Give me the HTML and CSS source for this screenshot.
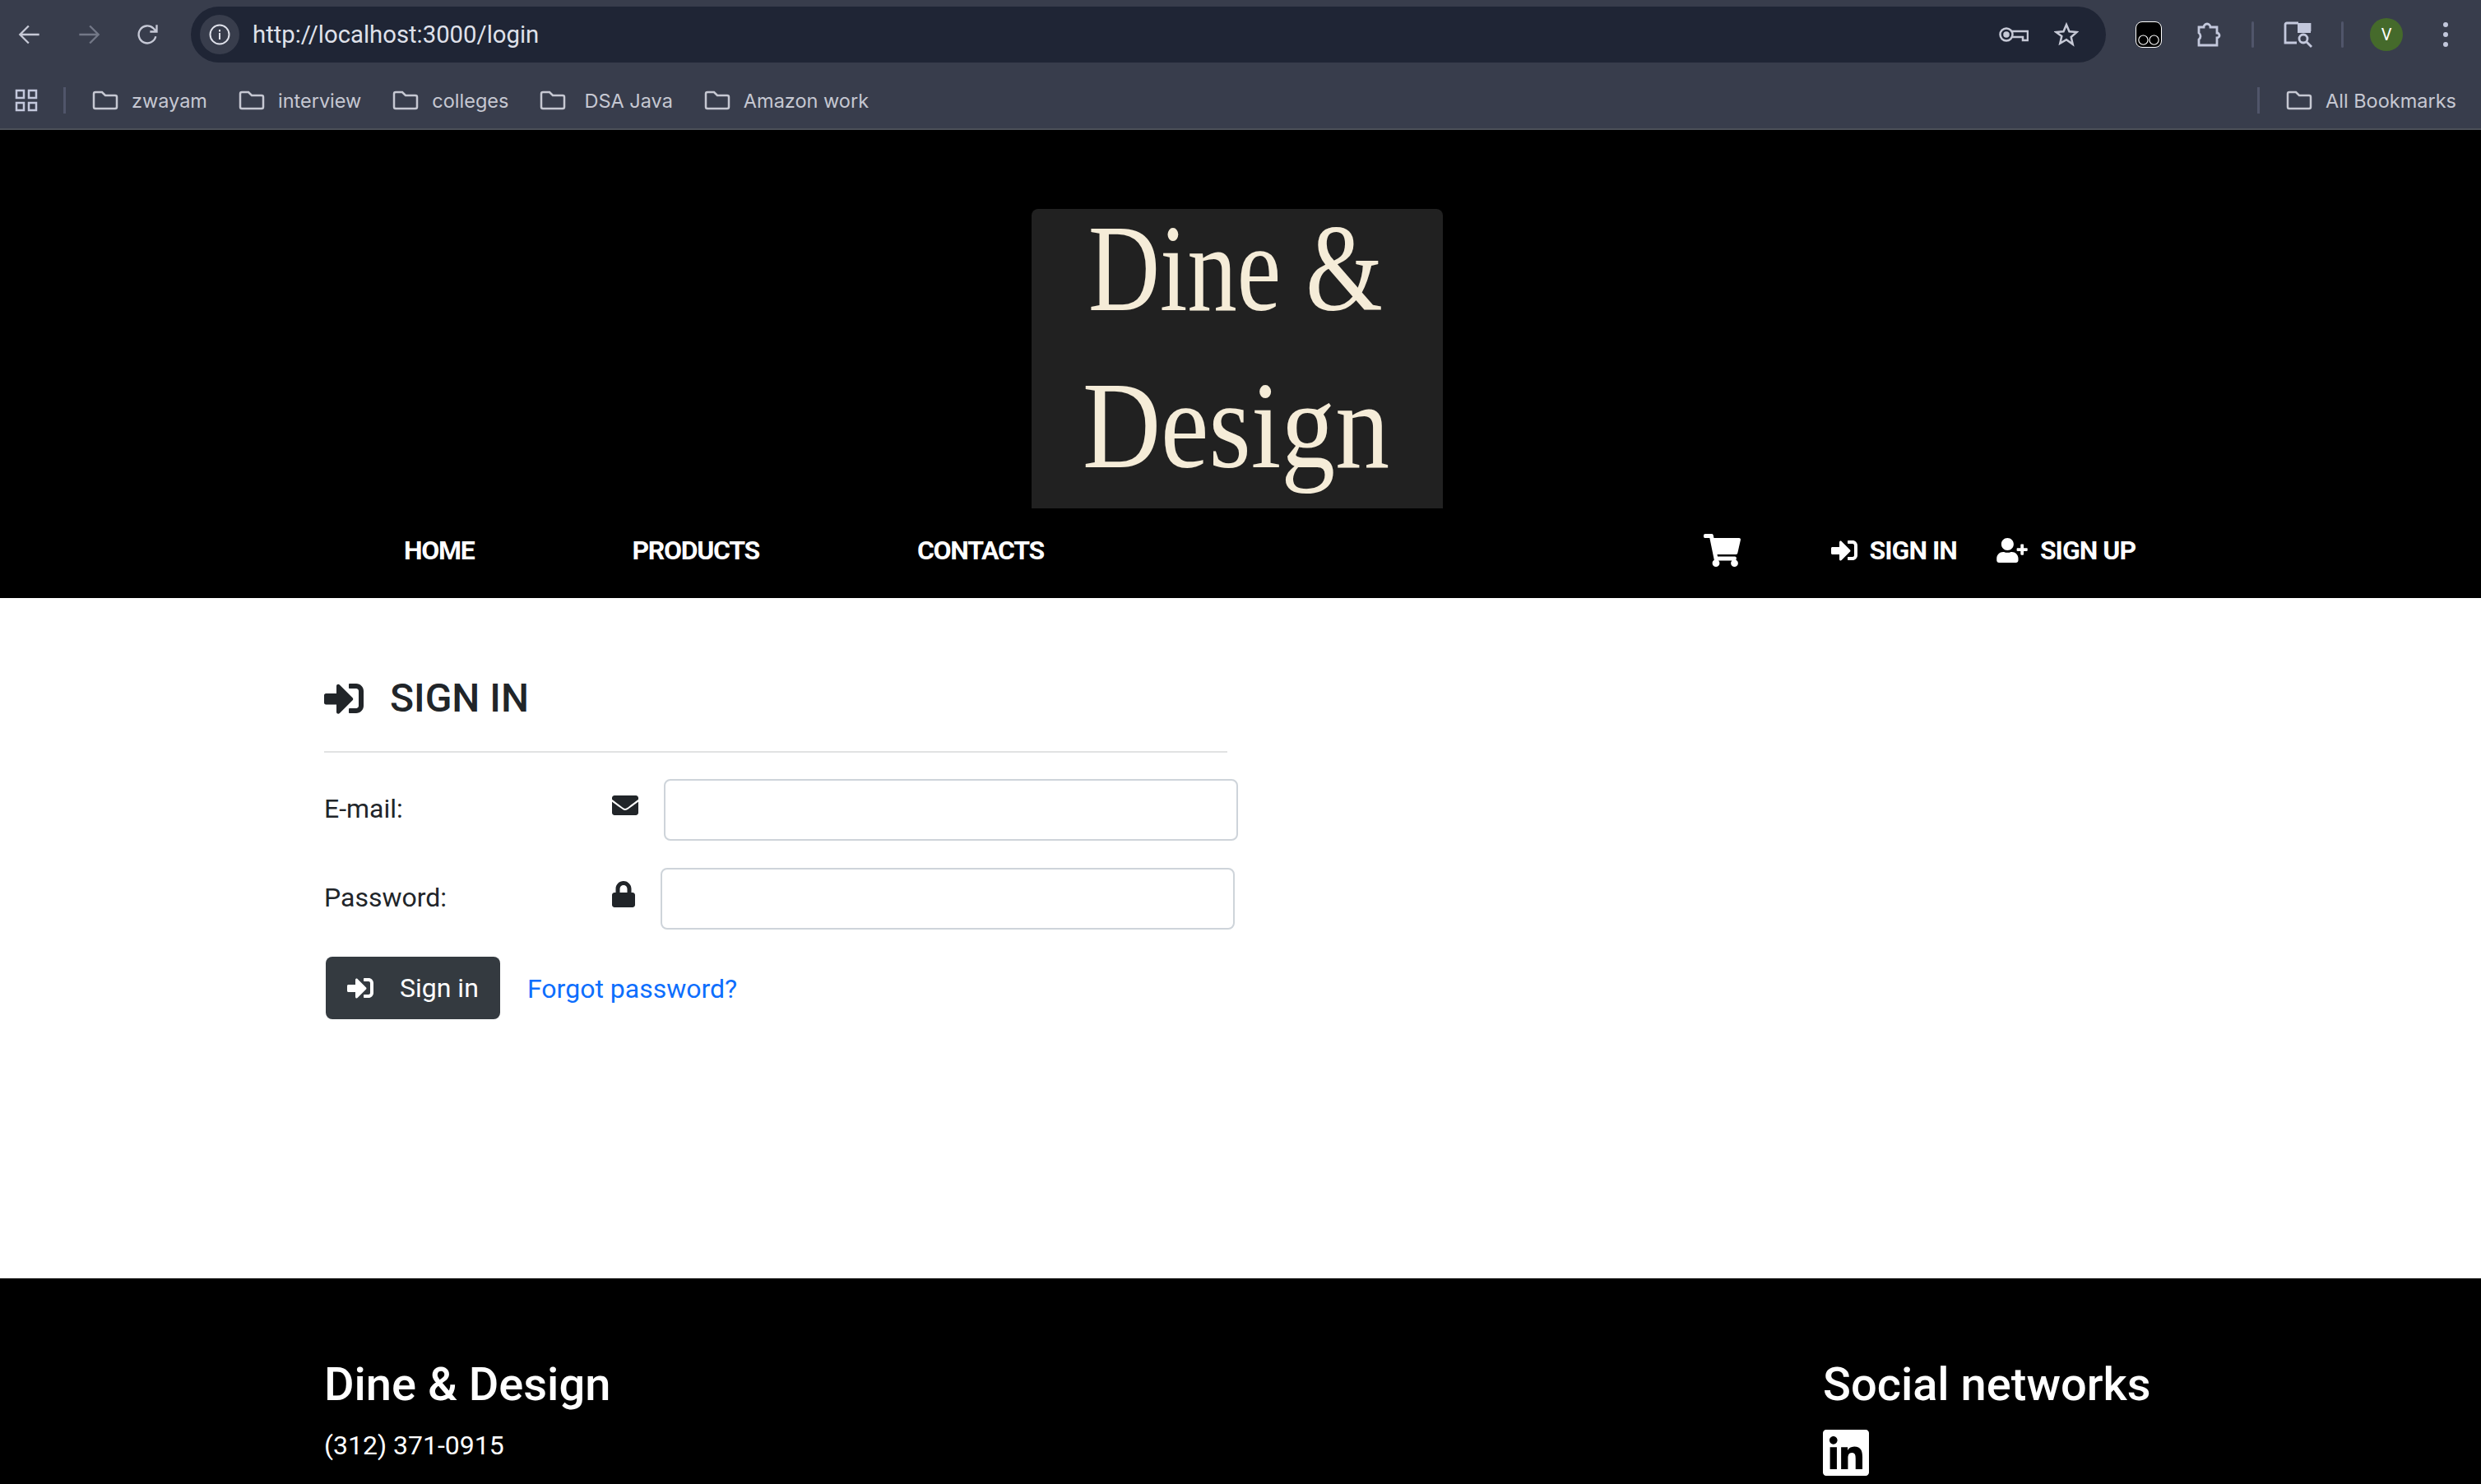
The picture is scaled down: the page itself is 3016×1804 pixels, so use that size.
FILE: index.html
```html
<!DOCTYPE html>
<html lang="en">
<head>
    <meta charset="UTF-8">
    <title>Dine &amp; Design | Sign in</title>
    <link rel="stylesheet" href="styles.css">
</head>
<body>
    <div class="toolbar">
        <svg class="tool-btn" viewBox="0 0 24 24" fill="none" stroke="#c6c9d6" stroke-width="2"><path d="M22 12H3M11 3l-9 9 9 9"/></svg>
        <svg class="tool-btn" viewBox="0 0 24 24" fill="none" stroke="#737887" stroke-width="2"><path d="M2 12h19M13 3l9 9-9 9"/></svg>
        <svg class="tool-btn" viewBox="0 0 24 24" fill="none" stroke="#c6c9d6" stroke-width="2"><path d="M20 14a9 9 0 1 1-2.500-8.500L21 9M21 2v7h-7"/></svg>
        <div class="omnibox">
            <span class="info-chip">
                <svg class="info-icon" viewBox="0 0 26 26" fill="none" stroke="#dfe1ea" stroke-width="2"><circle cx="13" cy="13" r="11.500"/><path d="M13 11v8M13 7v2.500"/></svg>
            </span>
            <span class="url">http://localhost:3000/login</span>
            <svg class="key-icon" viewBox="0 0 36 20" fill="none" stroke="#c6c9d6" stroke-width="2.500"><circle cx="9" cy="10" r="7.500"/><circle cx="9" cy="10" r="2.500" fill="#c6c9d6"/><path d="M16 6h19v11h-6v-4H16"/></svg>
            <svg class="star-icon" viewBox="0 0 30 30" fill="none" stroke="#c6c9d6" stroke-width="2.500"><path d="M15 3l3.500 8.300 9 .8-6.800 5.900 2 8.800L15 21.200 7.300 25.800l2-8.800L2.500 12.100l9-.8z"/></svg>
        </div>
        <span class="ext-glasses">
            <svg viewBox="0 0 32 32" fill="none" stroke="#fff" stroke-width="1.200"><circle cx="9" cy="23" r="6"/><circle cx="23" cy="23" r="6"/></svg>
        </span>
        <svg class="puzzle-icon" viewBox="0 0 30 32" fill="none" stroke="#c3c8dc" stroke-width="2.800"><path d="M3 7h6a4 4 0 0 1 8 0h8v7a3 3 0 0 1 0 6v9H3v-7a5 5 0 0 0 0-8z"/></svg>
        <span class="tool-divider"></span>
        <svg class="reader-icon" viewBox="0 0 36 32" fill="none"><path d="M17 2h16v12H17z" fill="#c3c8dc"/><path d="M18 2H4a2 2 0 0 0-2 2v22h14M32 12V2" stroke="#c3c8dc" stroke-width="2.800"/><circle cx="24" cy="21" r="5" stroke="#c3c8dc" stroke-width="2.800"/><path d="M28 25l6 6" stroke="#c3c8dc" stroke-width="2.800"/></svg>
        <span class="tool-divider divider-second"></span>
        <span class="avatar">V</span>
        <span class="menu-dots"><i></i><i></i><i></i></span>
    </div>

    <div class="bookmarks">
        <svg class="apps-icon" viewBox="0 0 28 28" fill="none" stroke="#c3c8dc" stroke-width="2.500"><path d="M2 2h9v9H2zM17 2h9v9h-9zM2 17h9v9H2zM17 17h9v9h-9z"/></svg>
        <span class="bm-divider"></span>
        <a class="bm"><svg class="folder" viewBox="0 0 32 24"><path d="M2 4a2 2 0 0 1 2-2h8l4 4h12a2 2 0 0 1 2 2v12a2 2 0 0 1-2 2H4a2 2 0 0 1-2-2z"/></svg>zwayam</a>
        <a class="bm"><svg class="folder" viewBox="0 0 32 24"><path d="M2 4a2 2 0 0 1 2-2h8l4 4h12a2 2 0 0 1 2 2v12a2 2 0 0 1-2 2H4a2 2 0 0 1-2-2z"/></svg>interview</a>
        <a class="bm"><svg class="folder" viewBox="0 0 32 24"><path d="M2 4a2 2 0 0 1 2-2h8l4 4h12a2 2 0 0 1 2 2v12a2 2 0 0 1-2 2H4a2 2 0 0 1-2-2z"/></svg>colleges</a>
        <a class="bm bm-wide"><svg class="folder" viewBox="0 0 32 24"><path d="M2 4a2 2 0 0 1 2-2h8l4 4h12a2 2 0 0 1 2 2v12a2 2 0 0 1-2 2H4a2 2 0 0 1-2-2z"/></svg>DSA Java</a>
        <a class="bm"><svg class="folder" viewBox="0 0 32 24"><path d="M2 4a2 2 0 0 1 2-2h8l4 4h12a2 2 0 0 1 2 2v12a2 2 0 0 1-2 2H4a2 2 0 0 1-2-2z"/></svg>Amazon work</a>
        <span class="bm-divider bm-divider-right"></span>
        <a class="bm bm-all"><svg class="folder" viewBox="0 0 32 24"><path d="M2 4a2 2 0 0 1 2-2h8l4 4h12a2 2 0 0 1 2 2v12a2 2 0 0 1-2 2H4a2 2 0 0 1-2-2z"/></svg>All Bookmarks</a>
    </div>

    <header class="site-header">
        <svg class="logo" viewBox="0 0 500 364">
            <text class="logo-text" x="69" y="123" textLength="358" lengthAdjust="spacingAndGlyphs">Dine &amp;</text>
            <text class="logo-text" x="62" y="314" textLength="373" lengthAdjust="spacingAndGlyphs">Design</text>
        </svg>
        <nav class="nav">
            <a class="nav-link">Home</a>
            <a class="nav-link">Products</a>
            <a class="nav-link">Contacts</a>
            <svg class="cart-icon" viewBox="0 0 576 512"><path d="M528.12 301.319l47.273-208C578.806 78.301 567.391 64 551.99 64H159.208l-9.166-44.810C147.758 8.021 137.930 0 126.529 0H24C10.745 0 0 10.745 0 24v16c0 13.255 10.745 24 24 24h69.883l70.248 343.435C147.325 417.100 136 435.222 136 456c0 30.928 25.072 56 56 56s56-25.072 56-56c0-15.674-6.447-29.835-16.824-40h209.647C430.447 426.165 424 440.326 424 456c0 30.928 25.072 56 56 56s56-25.072 56-56c0-22.172-12.888-41.332-31.579-50.405l5.517-24.276c3.413-15.018-8.002-29.319-23.403-29.319H218.117l-6.545-32h293.145c11.206 0 20.920-7.754 23.403-18.681z"/></svg>
            <a class="nav-action">
                <svg class="signin-icon" viewBox="0 0 512 512"><path d="M416 448h-84c-6.600 0-12-5.400-12-12v-40c0-6.600 5.400-12 12-12h84c17.700 0 32-14.300 32-32V160c0-17.700-14.300-32-32-32h-84c-6.600 0-12-5.400-12-12V76c0-6.600 5.400-12 12-12h84c53 0 96 43 96 96v192c0 53-43 96-96 96zm-47-201L201 79c-15-15-41-4.500-41 17v96H24c-13.300 0-24 10.700-24 24v96c0 13.300 10.700 24 24 24h136v96c0 21.500 26 32 41 17l168-168c9.300-9.400 9.300-24.600 0-34z"/></svg>
                Sign in
            </a>
            <a class="nav-action nav-action-last">
                <svg class="user-icon" viewBox="0 0 640 512"><path d="M624 208h-64v-64c0-8.800-7.200-16-16-16h-32c-8.800 0-16 7.200-16 16v64h-64c-8.800 0-16 7.200-16 16v32c0 8.800 7.200 16 16 16h64v64c0 8.800 7.200 16 16 16h32c8.800 0 16-7.200 16-16v-64h64c8.800 0 16-7.200 16-16v-32c0-8.800-7.200-16-16-16zm-400 48c70.700 0 128-57.300 128-128S294.700 0 224 0 96 57.300 96 128s57.300 128 128 128zm89.600 32h-16.700c-22.200 10.200-46.900 16-72.900 16s-50.600-5.800-72.900-16h-16.700C60.200 288 0 348.200 0 422.400V464c0 26.500 21.500 48 48 48h352c26.500 0 48-21.500 48-48v-41.600c0-74.200-60.200-134.400-134.400-134.400z"/></svg>
                Sign up
            </a>
        </nav>
    </header>

    <main class="content">
        <h2 class="page-title">
            <svg class="title-icon" viewBox="0 0 512 512"><path d="M416 448h-84c-6.600 0-12-5.400-12-12v-40c0-6.600 5.400-12 12-12h84c17.700 0 32-14.300 32-32V160c0-17.700-14.300-32-32-32h-84c-6.600 0-12-5.400-12-12V76c0-6.600 5.400-12 12-12h84c53 0 96 43 96 96v192c0 53-43 96-96 96zm-47-201L201 79c-15-15-41-4.500-41 17v96H24c-13.300 0-24 10.700-24 24v96c0 13.300 10.700 24 24 24h136v96c0 21.500 26 32 41 17l168-168c9.300-9.400 9.300-24.600 0-34z"/></svg>
            SIGN IN
        </h2>
        <form class="login-form">
            <div class="form-row">
                <label class="form-label" for="email">E-mail:</label>
                <svg class="mail-icon" viewBox="0 0 512 512"><path d="M502.300 190.800c3.900-3.100 9.700-.2 9.700 4.700V400c0 26.500-21.500 48-48 48H48c-26.500 0-48-21.500-48-48V195.600c0-5 5.700-7.800 9.700-4.700 22.400 17.400 52.100 39.500 154.100 113.600 21.100 15.400 56.700 47.800 92.200 47.600 35.700.3 72-32.800 92.300-47.600 102-74.100 131.600-96.300 154-113.700zM256 320c23.200.4 56.600-29.200 73.400-41.400 132.700-96.300 142.800-104.700 173.400-128.700 5.800-4.500 9.200-11.500 9.200-18.900v-19c0-26.500-21.500-48-48-48H48C21.500 64 0 85.500 0 112v19c0 7.400 3.400 14.300 9.200 18.900 30.600 23.900 40.700 32.400 173.400 128.700 16.800 12.200 50.200 41.800 73.400 41.400z"/></svg>
                <input class="form-input" type="text" id="email">
            </div>
            <div class="form-row">
                <label class="form-label" for="password">Password:</label>
                <svg class="lock-icon" viewBox="0 0 448 512"><path d="M400 224h-24v-72C376 68.200 307.800 0 224 0S72 68.200 72 152v72H48c-26.500 0-48 21.500-48 48v192c0 26.500 21.500 48 48 48h352c26.500 0 48-21.500 48-48V272c0-26.500-21.500-48-48-48zm-104 0H152v-72c0-39.700 32.300-72 72-72s72 32.300 72 72v72z"/></svg>
                <input class="form-input" type="password" id="password">
            </div>
            <div class="form-actions">
                <button class="btn-signin" type="button">
                    <svg class="btn-icon" viewBox="0 0 512 512"><path d="M416 448h-84c-6.600 0-12-5.400-12-12v-40c0-6.600 5.400-12 12-12h84c17.700 0 32-14.300 32-32V160c0-17.700-14.300-32-32-32h-84c-6.600 0-12-5.400-12-12V76c0-6.600 5.400-12 12-12h84c53 0 96 43 96 96v192c0 53-43 96-96 96zm-47-201L201 79c-15-15-41-4.500-41 17v96H24c-13.300 0-24 10.700-24 24v96c0 13.300 10.700 24 24 24h136v96c0 21.500 26 32 41 17l168-168c9.300-9.400 9.300-24.600 0-34z"/></svg>
                    Sign in
                </button>
                <a class="forgot-link">Forgot password?</a>
            </div>
        </form>
    </main>

    <footer class="site-footer">
        <div class="footer-col">
            <h3 class="footer-title">Dine &amp; Design</h3>
            <p class="footer-text">(312) 371-0915</p>
        </div>
        <div class="footer-col">
            <h3 class="footer-title">Social networks</h3>
            <svg class="linkedin-icon" viewBox="0 0 448 512"><path d="M416 32H31.900C14.300 32 0 46.500 0 64.300v383.400C0 465.500 14.300 480 31.900 480H416c17.600 0 32-14.500 32-32.300V64.300c0-17.800-14.400-32.300-32-32.300zM135.400 416H69V202.200h66.500V416zm-33.200-243c-21.300 0-38.500-17.300-38.500-38.500S80.900 96 102.200 96c21.200 0 38.500 17.300 38.500 38.500 0 21.300-17.200 38.500-38.500 38.500zm282.100 243h-66.400V312c0-24.800-.5-56.700-34.500-56.700-34.600 0-39.900 27-39.900 54.900V416h-66.400V202.200h63.700v29.200h.9c8.900-16.800 30.600-34.500 62.900-34.500 67.200 0 79.700 44.300 79.700 101.900V416z"/></svg>
        </div>
    </footer>
</body>
</html>
```

FILE: styles.css
```css
* {
    box-sizing: border-box;
}
body {
    margin: 0;
    height: 1804px;
    overflow: hidden;
    display: flex;
    flex-direction: column;
    font-family: Roboto, sans-serif;
    font-size: 32px;
    color: #212529;
    background-color: #fff;
}

/* browser bars */
.toolbar {
    height: 84px;
    flex: none;
    display: flex;
    align-items: center;
    background-color: #383d4c;
}
.tool-btn {
    width: 72px;
    height: 28px;
}
.omnibox {
    width: 2328px;
    height: 68px;
    margin-left: 16px;
    display: flex;
    align-items: center;
    padding: 0 33px 0 11px;
    border-radius: 34px;
    background-color: #1f2535;
}
.info-chip {
    width: 48px;
    height: 48px;
    display: flex;
    align-items: center;
    justify-content: center;
    border-radius: 50%;
    background-color: #383d4c;
}
.info-icon {
    width: 26px;
    height: 26px;
}
.url {
    margin-left: 16px;
    flex: 1;
    font-size: 29.300px;
    color: #dfe1ea;
}
.key-icon {
    width: 36px;
    height: 20px;
}
.star-icon {
    width: 30px;
    height: 30px;
    margin-left: 31px;
}
.ext-glasses {
    width: 32px;
    height: 32px;
    margin-left: 36px;
    border: 1px solid #fff;
    border-radius: 8px;
    background-color: #000;
}
.ext-glasses svg {
    display: block;
    width: 30px;
    height: 30px;
}
.puzzle-icon {
    width: 30px;
    height: 32px;
    margin-left: 42px;
}
.tool-divider {
    width: 3px;
    height: 32px;
    margin-left: 37px;
    border-radius: 2px;
    background-color: #50556a;
}
.reader-icon {
    width: 36px;
    height: 32px;
    margin-left: 36px;
}
.divider-second {
    margin-left: 34px;
}
.avatar {
    width: 40px;
    height: 40px;
    margin-left: 32px;
    display: flex;
    align-items: center;
    justify-content: center;
    border-radius: 50%;
    font-size: 20px;
    color: #fff;
    background-color: #456a2b;
}
.menu-dots {
    margin-left: 49px;
    display: flex;
    flex-direction: column;
    gap: 6px;
}
.menu-dots i {
    width: 6px;
    height: 6px;
    border-radius: 50%;
    background-color: #c3c8dc;
}
.bookmarks {
    height: 74px;
    flex: none;
    display: flex;
    align-items: center;
    padding: 4px 30px 0 18px;
    border-bottom: 2px solid #4c5159;
    background-color: #383d4c;
}
.apps-icon {
    width: 28px;
    height: 28px;
}
.bm-divider {
    width: 3px;
    height: 32px;
    margin: 0 32px 0 31px;
    background-color: #50556a;
}
.bm-divider-right {
    margin: 0 32px 0 auto;
}
.bm {
    display: flex;
    align-items: center;
    margin-right: 38px;
    font-family: Inter, sans-serif;
    font-size: 23.500px;
    color: #c6c8d2;
}
.bm-all {
    margin-right: 0;
}
.folder {
    width: 32px;
    height: 24px;
    margin-right: 16px;
    fill: none;
    stroke: #c6c8d2;
    stroke-width: 2.500;
}
.bm-wide .folder {
    margin-right: 22px;
}

/* site header */
.site-header {
    flex: none;
    display: flex;
    flex-direction: column;
    align-items: center;
    padding-top: 96px;
    background-color: #000;
}
.logo {
    display: block;
    width: 500px;
    height: 364px;
    margin-right: 8px;
    overflow: visible;
    border-radius: 8px 8px 0 0;
    background-color: #212121;
}
.logo-text {
    font-family: "Liberation Serif", serif;
    font-size: 150px;
    fill: #f5ecd8;
}
.nav {
    width: 100%;
    height: 109px;
    display: flex;
    align-items: center;
    padding: 0 420px 7px 395px;
    color: #fff;
    font-weight: 700;
    font-size: 32px;
    letter-spacing: -1px;
    text-transform: uppercase;
}
.nav-link {
    padding: 0 96px;
    letter-spacing: -1.300px;
}
.cart-icon {
    width: 45px;
    height: 40px;
    margin-left: auto;
    fill: #fff;
}
.nav-action {
    display: flex;
    align-items: center;
    gap: 15px;
    margin-left: 110px;
}
.nav-action-last {
    margin-left: 48px;
}
.signin-icon {
    width: 32px;
    height: 32px;
    fill: #fff;
}
.user-icon {
    width: 38px;
    height: 30px;
    fill: #fff;
}

/* sign in form */
.content {
    flex: none;
    height: 827px;
    padding: 93px 0 0 394px;
}
.page-title {
    width: 1098px;
    margin: 0 0 32px;
    padding-bottom: 36px;
    display: flex;
    align-items: center;
    gap: 32px;
    border-bottom: 2px solid #e1e2e3;
    font-size: 48px;
    font-weight: 500;
    line-height: 57px;
}
.title-icon {
    width: 48px;
    height: 48px;
    fill: #212529;
}
.form-row {
    display: flex;
    align-items: center;
    margin-bottom: 33px;
}
.form-label {
    width: 350px;
    margin-bottom: 4px;
}
.mail-icon {
    width: 32px;
    height: 32px;
    margin: 0 31px 12px 0;
    fill: #212529;
}
.lock-icon {
    width: 28px;
    height: 32px;
    margin: 0 31px 12px 0;
    fill: #212529;
}
.form-input {
    width: 698px;
    height: 75px;
    border: 2px solid #ced4da;
    border-radius: 8px;
    background-color: #fff;
}
.form-actions {
    display: flex;
    align-items: center;
    padding-left: 2px;
}
.btn-signin {
    width: 212px;
    height: 76px;
    display: flex;
    align-items: center;
    gap: 32px;
    padding: 0 0 0 26px;
    border: none;
    border-radius: 8px;
    font-family: Roboto, sans-serif;
    font-size: 32px;
    color: #fff;
    background-color: #343a40;
}
.btn-icon {
    width: 32px;
    height: 32px;
    fill: #fff;
}
.forgot-link {
    margin-left: 33px;
    padding-top: 2px;
    color: #0d6efd;
}

/* footer */
.site-footer {
    flex: none;
    height: 250px;
    display: grid;
    grid-template-columns: 1822px auto;
    padding: 96px 0 0 394px;
    color: #fff;
    background-color: #000;
}
.footer-title {
    margin: 0 0 17px;
    font-size: 56px;
    font-weight: 500;
    line-height: 67px;
}
.footer-text {
    margin: -1px 0 0;
    line-height: 48px;
}
.linkedin-icon {
    display: block;
    width: 56px;
    height: 64px;
    fill: #fff;
}
```
